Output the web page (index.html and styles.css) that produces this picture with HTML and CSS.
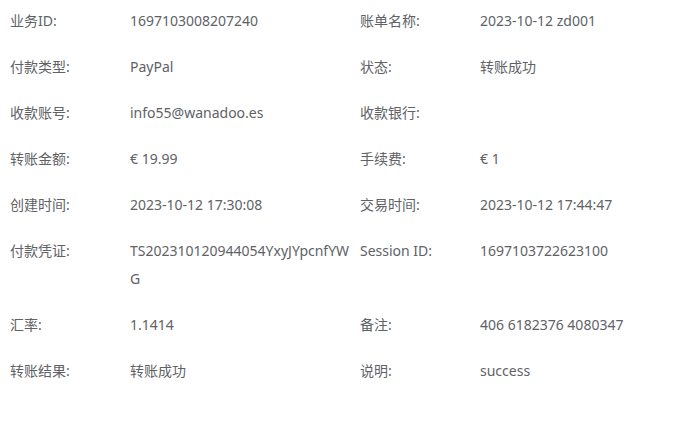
FILE: index.html
```html
<!DOCTYPE html>
<html lang="zh-CN">
  <head>
    <meta charset="UTF-8" />
    <title>账单详情</title>
    <link rel="stylesheet" href="styles.css">
  </head>
  <body>
    <div class="detail">
      <div class="label">业务ID:</div>
      <div class="value">1697103008207240</div>
      <div class="label">账单名称:</div>
      <div class="value">2023-10-12 zd001</div>

      <div class="label">付款类型:</div>
      <div class="value">PayPal</div>
      <div class="label">状态:</div>
      <div class="value">转账成功</div>

      <div class="label">收款账号:</div>
      <div class="value">info55@wanadoo.es</div>
      <div class="label">收款银行:</div>
      <div class="value"></div>

      <div class="label">转账金额:</div>
      <div class="value">€ 19.99</div>
      <div class="label">手续费:</div>
      <div class="value">€ 1</div>

      <div class="label">创建时间:</div>
      <div class="value">2023-10-12 17:30:08</div>
      <div class="label">交易时间:</div>
      <div class="value">2023-10-12 17:44:47</div>

      <div class="label">付款凭证:</div>
      <div class="value">TS202310120944054YxyJYpcnfYWG</div>
      <div class="label">Session ID:</div>
      <div class="value">1697103722623100</div>

      <div class="label">汇率:</div>
      <div class="value">1.1414</div>
      <div class="label">备注:</div>
      <div class="value">406 6182376 4080347</div>

      <div class="label">转账结果:</div>
      <div class="value">转账成功</div>
      <div class="label">说明:</div>
      <div class="value">success</div>
    </div>
  </body>
</html>
```

FILE: styles.css
```css
* {
  box-sizing: border-box;
}

body {
  margin: 0;
  background-color: #fff;
  font-family: "Noto Sans", "Noto Sans CJK SC", sans-serif;
  font-size: 14px;
  color: #606266;
}

.detail {
  display: grid;
  grid-template-columns: 120px 230px 120px 1fr;
  row-gap: 18px;
  padding: 7px 0 0 10px;
  line-height: 28px;
}

.value {
  padding-right: 8px;
  word-break: break-all;
}
```
